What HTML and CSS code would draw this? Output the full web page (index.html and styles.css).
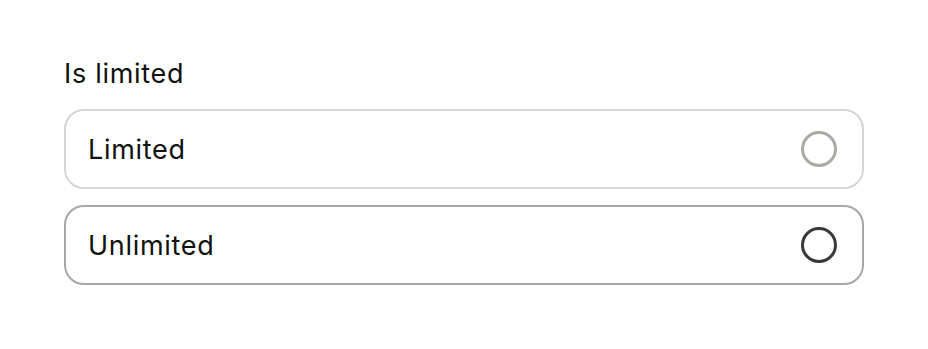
FILE: index.html
```html
<!DOCTYPE html>
<html lang="en">
<head>
    <meta charset="UTF-8">
    <meta name="viewport" content="width=device-width, initial-scale=1.0">
    <title>Is limited</title>
    <link rel="stylesheet" href="styles.css">
</head>
<body>
    <div class="field">
        <div class="field-label">Is limited</div>
        <div class="options">
            <label class="option">
                <span class="option-text">Limited</span>
                <span class="radio"></span>
            </label>
            <label class="option option-hover">
                <span class="option-text">Unlimited</span>
                <span class="radio"></span>
            </label>
        </div>
    </div>
</body>
</html>
```

FILE: styles.css
```css
body {
    margin: 0;
    font-family: Inter, "Noto Sans", sans-serif;
    color: #111;
    background: #fff;
}
.field {
    width: 800px;
    padding: 56px 0 0 64px;
}
.field-label {
    font-size: 27px;
    letter-spacing: 0.7px;
    line-height: 36px;
    margin-bottom: 17px;
}
.options {
    display: flex;
    flex-direction: column;
    gap: 16px;
}
.option {
    display: flex;
    align-items: center;
    justify-content: space-between;
    box-sizing: border-box;
    height: 80px;
    padding: 0 25px 0 22px;
    border: 2px solid #d6d5d4;
    border-radius: 20px;
    cursor: pointer;
}
.option-text {
    font-size: 27px;
    letter-spacing: 0.7px;
}
.radio {
    width: 30px;
    height: 30px;
    border: 3px solid #aca8a4;
    border-radius: 50%;
}
.option-hover {
    border-color: #a8a6a2;
}
.option-hover .radio {
    border-color: #3b3a37;
}
```
